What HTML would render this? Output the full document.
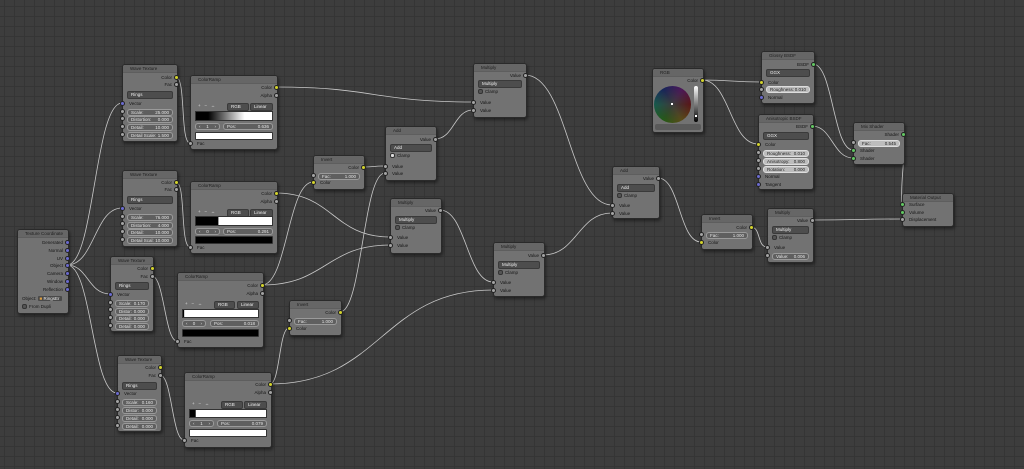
<!DOCTYPE html>
<html><head><meta charset="utf-8"><style>
html,body{margin:0;padding:0}
body{width:1024px;height:469px;overflow:hidden;position:relative;background-color:#3d3d3d;
background-image:linear-gradient(#353535 1px,transparent 1px),linear-gradient(90deg,#353535 1px,transparent 1px);
background-size:10px 10px;background-position:4px 6px;font-family:"Liberation Sans",sans-serif}
.n{position:absolute;background:#727272;border:1px solid #2a2a2a;border-radius:3px;box-shadow:1px 2px 3px rgba(0,0,0,.45);font-size:4.5px;line-height:6px;color:#151515;overflow:hidden}
.h{height:7px;background:#666;padding-left:7px;line-height:7px;color:#1e1e1e;border-bottom:1px solid #5e5e5e}
.n>div:not(.h){position:absolute}
.r{right:5px}.l{left:6px}
.f{left:4px;right:4px;height:5px;background:#5f5f5f;border:1px solid #9a9a9a;border-radius:3px;color:#e2e2e2;line-height:5px;padding:0 3px;display:flex;justify-content:space-between;box-sizing:content-box}
.fl{background:#bdbdbd;color:#222;border-color:#ddd}
.d{left:4px;right:4px;height:6px;background:#4d4d4d;border:1px solid #3a3a3a;border-radius:2px;color:#eee;line-height:6px;padding-left:3px}
.cb{display:inline-block;width:3px;height:3px;border:1px solid #333;border-radius:2px;background:#555;vertical-align:middle;margin-right:2px}
.s{position:absolute;width:3.5px;height:3.5px;border-radius:50%;border:0.5px solid #222;margin:-2.25px 0 0 -2.25px}
.y{background:#d4d42c}.g{background:#a4a4a4}.p{background:#6b6bd0}.gr{background:#62c862}
svg{position:absolute;left:0;top:0}
</style></head><body>
<svg width="1024" height="469" fill="none" stroke="#c8c8c8" stroke-width="0.8">
<path d="M67 265 C94.5 265 94.5 103 122 103"/>
<path d="M67 265 C94.5 265 94.5 208 122 208"/>
<path d="M67 265 C88 265 88 294 110 294"/>
<path d="M67 265 C92 265 92 393 117 393"/>
<path d="M176 77 C186 77 180 143 190 143"/>
<path d="M176 182 C186 182 180 247 190 247"/>
<path d="M152 276 C164 276 165 341 177 341"/>
<path d="M160 375 C172 375 172 440 184 440"/>
<path d="M276 87 C374 87 374 102 473 102"/>
<path d="M435 139 C454 139 454 110 473 110"/>
<path d="M276 193 C333 193 333 237 390 237"/>
<path d="M262 285 C326 285 326 245 390 245"/>
<path d="M262 285 C287 285 288 182 313 182"/>
<path d="M363 167 C374 167 374 166 385 166"/>
<path d="M340 312 C362 312 363 173 385 173"/>
<path d="M270 384 C280 384 279 328 289 328"/>
<path d="M270 384 C381 384 382 290 493 290"/>
<path d="M440 210 C466 210 467 282 493 282"/>
<path d="M525 75 C568 75 569 205 612 205"/>
<path d="M543 255 C577 255 578 213 612 213"/>
<path d="M658 178 C680 178 679 242 701 242"/>
<path d="M751 227 C761 227 757 247 767 247"/>
<path d="M812 220 C857 220 857 219 902 219"/>
<path d="M702 80 C731 80 732 82 761 82"/>
<path d="M702 80 C730 80 730 144 758 144"/>
<path d="M813 64 C833 64 833 150 853 150"/>
<path d="M812 126 C832 126 833 158 853 158"/>
<path d="M903 134 C906 160 900 180 902 204"/>
</svg>

<div class="n" style="left:17px;top:229px;width:50px;height:83px">
<div class="h">Texture Coordinate</div>
<div class="r" style="top:10px">Generated</div><div class="r" style="top:18px">Normal</div><div class="r" style="top:26px">UV</div><div class="r" style="top:33px">Object</div><div class="r" style="top:41px">Camera</div><div class="r" style="top:49px">Window</div><div class="r" style="top:57px">Reflection</div>
<div class="l" style="top:66px;left:4px">Object: <span style="background:#4a4a4a;color:#eee;padding:0 2px;border-radius:1px"><span style="color:#e0a040">■</span> RingsEr</span></div>
<div class="l" style="top:74px;left:4px"><span class="cb"></span>From Dupli</div>
</div>

<div class="n" style="left:122px;top:64px;width:54px;height:76px"><div class="h">Wave Texture</div>
<div class="r" style="top:10px">Color</div><div class="r" style="top:17px">Fac</div>
<div class="d" style="top:26px">Rings</div><div class="l" style="top:36px">Vector</div>
<div class="f" style="top:44px"><span>Scale:</span><span>25.000</span></div>
<div class="f" style="top:51px"><span>Distortion:</span><span>0.000</span></div>
<div class="f" style="top:59px"><span>Detail:</span><span>10.000</span></div>
<div class="f" style="top:67px"><span>Detail Scale:</span><span>1.500</span></div></div>

<div class="n" style="left:122px;top:170px;width:54px;height:75px"><div class="h">Wave Texture</div>
<div class="r" style="top:9px">Color</div><div class="r" style="top:16px">Fac</div>
<div class="d" style="top:25px">Rings</div><div class="l" style="top:35px">Vector</div>
<div class="f" style="top:43px"><span>Scale:</span><span>76.000</span></div>
<div class="f" style="top:51px"><span>Distortion:</span><span>4.000</span></div>
<div class="f" style="top:58px"><span>Detail:</span><span>10.000</span></div>
<div class="f" style="top:66px"><span>Detail Scal:</span><span>10.000</span></div></div>

<div class="n" style="left:110px;top:256px;width:42px;height:74px"><div class="h">Wave Texture</div>
<div class="r" style="top:9px">Color</div><div class="r" style="top:17px">Fac</div>
<div class="d" style="top:25px">Rings</div><div class="l" style="top:35px">Vector</div>
<div class="f" style="top:43px"><span>Scale:</span><span>0.170</span></div>
<div class="f" style="top:51px"><span>Distor:</span><span>0.000</span></div>
<div class="f" style="top:58px"><span>Detail:</span><span>0.000</span></div>
<div class="f" style="top:66px"><span>Detail:</span><span>0.000</span></div></div>

<div class="n" style="left:117px;top:355px;width:43px;height:75px"><div class="h">Wave Texture</div>
<div class="r" style="top:9px">Color</div><div class="r" style="top:17px">Fac</div>
<div class="d" style="top:26px">Rings</div><div class="l" style="top:35px">Vector</div>
<div class="f" style="top:43px"><span>Scale:</span><span>0.160</span></div>
<div class="f" style="top:51px"><span>Distor:</span><span>0.000</span></div>
<div class="f" style="top:59px"><span>Detail:</span><span>0.000</span></div>
<div class="f" style="top:67px"><span>Detail:</span><span>0.000</span></div></div>

<div class="n" style="left:190px;top:75px;width:86px;height:73px"><div class="h">ColorRamp</div>
<div class="r" style="top:9px">Color</div><div class="r" style="top:17px">Alpha</div>
<div class="l" style="top:27px;left:7px;color:#ddd">+ &nbsp;&nbsp;− &nbsp;&nbsp;↔</div>
<div class="d" style="top:27px;left:36px;right:28px">RGB</div><div class="d" style="top:27px;left:59px;right:4px">Linear</div>
<div style="top:35px;left:4px;right:4px;height:8px;background:linear-gradient(90deg,#000 16%,#fff 64%);border:1px solid #333"></div>
<div class="f" style="top:47px;right:57px"><span>‹</span><span>1</span><span>›</span></div>
<div class="f" style="top:47px;left:32px"><span>Pos:</span><span>0.636</span></div>
<div style="top:56px;left:4px;right:4px;height:6px;background:#fff;border:1px solid #333;border-radius:1px"></div>
<div class="l" style="top:65px">Fac</div></div>

<div class="n" style="left:190px;top:181px;width:86px;height:71px"><div class="h">ColorRamp</div>
<div class="r" style="top:9px">Color</div><div class="r" style="top:17px">Alpha</div>
<div class="l" style="top:27px;left:7px;color:#ddd">+ &nbsp;&nbsp;− &nbsp;&nbsp;↔</div>
<div class="d" style="top:27px;left:36px;right:28px">RGB</div><div class="d" style="top:27px;left:59px;right:4px">Linear</div>
<div style="top:34px;left:4px;right:4px;height:8px;background:linear-gradient(90deg,#000 29%,#fff 30%);border:1px solid #333"></div>
<div class="f" style="top:46px;right:57px"><span>‹</span><span>0</span><span>›</span></div>
<div class="f" style="top:46px;left:32px"><span>Pos:</span><span>0.291</span></div>
<div style="top:54px;left:4px;right:4px;height:6px;background:#000;border:1px solid #333;border-radius:1px"></div>
<div class="l" style="top:63px">Fac</div></div>

<div class="n" style="left:177px;top:272px;width:85px;height:74px"><div class="h">ColorRamp</div>
<div class="r" style="top:10px">Color</div><div class="r" style="top:18px">Alpha</div>
<div class="l" style="top:28px;left:7px;color:#ddd">+ &nbsp;&nbsp;− &nbsp;&nbsp;↔</div>
<div class="d" style="top:28px;left:36px;right:28px">RGB</div><div class="d" style="top:28px;left:59px;right:4px">Linear</div>
<div style="top:36px;left:4px;right:4px;height:7px;background:linear-gradient(90deg,#000 1%,#fff 2%);border:1px solid #333"></div>
<div class="f" style="top:47px;right:57px"><span>‹</span><span>0</span><span>›</span></div>
<div class="f" style="top:47px;left:32px"><span>Pos:</span><span>0.018</span></div>
<div style="top:56px;left:4px;right:4px;height:6px;background:#000;border:1px solid #333;border-radius:1px"></div>
<div class="l" style="top:66px">Fac</div></div>

<div class="n" style="left:184px;top:372px;width:86px;height:74px"><div class="h">ColorRamp</div>
<div class="r" style="top:9px">Color</div><div class="r" style="top:17px">Alpha</div>
<div class="l" style="top:28px;left:7px;color:#ddd">+ &nbsp;&nbsp;− &nbsp;&nbsp;↔</div>
<div class="d" style="top:28px;left:36px;right:28px">RGB</div><div class="d" style="top:28px;left:59px;right:4px">Linear</div>
<div style="top:36px;left:4px;right:4px;height:7px;background:linear-gradient(90deg,#000 7%,#fff 8%);border:1px solid #333"></div>
<div class="f" style="top:47px;right:57px"><span>‹</span><span>1</span><span>›</span></div>
<div class="f" style="top:47px;left:32px"><span>Pos:</span><span>0.079</span></div>
<div style="top:56px;left:4px;right:4px;height:6px;background:#fff;border:1px solid #333;border-radius:1px"></div>
<div class="l" style="top:65px">Fac</div></div>

<div class="n" style="left:313px;top:155px;width:50px;height:33px"><div class="h">Invert</div>
<div class="r" style="top:9px">Color</div><div class="f" style="top:17px"><span>Fac:</span><span>1.000</span></div><div class="l" style="top:24px">Color</div></div>
<div class="n" style="left:289px;top:300px;width:51px;height:34px"><div class="h">Invert</div>
<div class="r" style="top:9px">Color</div><div class="f" style="top:17px"><span>Fac:</span><span>1.000</span></div><div class="l" style="top:25px">Color</div></div>
<div class="n" style="left:701px;top:214px;width:50px;height:34px"><div class="h">Invert</div>
<div class="r" style="top:10px">Color</div><div class="f" style="top:17px"><span>Fac:</span><span>1.000</span></div><div class="l" style="top:25px">Color</div></div>

<div class="n" style="left:385px;top:126px;width:50px;height:53px"><div class="h">Add</div>
<div class="r" style="top:10px">Value</div><div class="d" style="top:17px">Add</div>
<div class="l" style="top:26px;left:4px"><span class="cb" style="background:#ddd"></span>Clamp</div>
<div class="l" style="top:37px">Value</div><div class="l" style="top:44px">Value</div></div>
<div class="n" style="left:473px;top:63px;width:52px;height:53px"><div class="h">Multiply</div>
<div class="r" style="top:9px">Value</div><div class="d" style="top:16px">Multiply</div>
<div class="l" style="top:25px;left:4px"><span class="cb"></span>Clamp</div>
<div class="l" style="top:36px">Value</div><div class="l" style="top:44px">Value</div></div>
<div class="n" style="left:390px;top:198px;width:50px;height:54px"><div class="h">Multiply</div>
<div class="r" style="top:9px">Value</div><div class="d" style="top:17px">Multiply</div>
<div class="l" style="top:26px;left:4px"><span class="cb"></span>Clamp</div>
<div class="l" style="top:36px">Value</div><div class="l" style="top:44px">Value</div></div>
<div class="n" style="left:493px;top:242px;width:50px;height:53px"><div class="h">Multiply</div>
<div class="r" style="top:10px">Value</div><div class="d" style="top:18px">Multiply</div>
<div class="l" style="top:27px;left:4px"><span class="cb"></span>Clamp</div>
<div class="l" style="top:37px">Value</div><div class="l" style="top:45px">Value</div></div>
<div class="n" style="left:612px;top:166px;width:46px;height:51px"><div class="h">Add</div>
<div class="r" style="top:9px">Value</div><div class="d" style="top:17px">Add</div>
<div class="l" style="top:26px;left:4px"><span class="cb"></span>Clamp</div>
<div class="l" style="top:36px">Value</div><div class="l" style="top:44px">Value</div></div>
<div class="n" style="left:767px;top:208px;width:45px;height:53px"><div class="h">Multiply</div>
<div class="r" style="top:9px">Value</div><div class="d" style="top:17px">Multiply</div>
<div class="l" style="top:26px;left:4px"><span class="cb"></span>Clamp</div>
<div class="l" style="top:36px">Value</div><div class="f" style="top:44px"><span>Value:</span><span>0.006</span></div></div>

<div class="n" style="left:652px;top:68px;width:50px;height:63px"><div class="h">RGB</div>
<div class="r" style="top:9px">Color</div>
<div style="left:1px;top:17px;width:37px;height:37px;border-radius:50%;background:radial-gradient(circle,rgba(70,70,70,1) 0,rgba(50,50,50,0) 70%),conic-gradient(from 90deg,#6a1a1a,#6a5a1a,#2a6a1a,#1a6a5a,#1a2a6a,#5a1a6a,#6a1a1a);filter:brightness(0.85)"></div>
<div style="left:18px;top:34px;width:2px;height:2px;background:#fff"></div>
<div style="left:41px;top:17px;width:4px;height:36px;border-radius:2px;background:linear-gradient(#fff,#000)"></div>
<div style="left:42px;top:46px;width:2px;height:2px;background:#fff"></div>
<div style="left:2px;right:2px;top:55px;height:6px;background:#5a5a5a;border-radius:2px"></div></div>

<div class="n" style="left:761px;top:51px;width:52px;height:51px"><div class="h">Glossy BSDF</div>
<div class="r" style="top:10px">BSDF</div><div class="d" style="top:17px">GGX</div>
<div class="l" style="top:28px">Color</div><div class="f fl" style="top:34px"><span>Roughness:</span><span>0.010</span></div>
<div class="l" style="top:43px">Normal</div></div>
<div class="n" style="left:758px;top:114px;width:54px;height:74px"><div class="h">Anisotropic BSDF</div>
<div class="r" style="top:9px">BSDF</div><div class="d" style="top:17px">GGX</div>
<div class="l" style="top:27px">Color</div>
<div class="f fl" style="top:35px"><span>Roughness:</span><span>0.010</span></div>
<div class="f fl" style="top:43px"><span>Anisotropy:</span><span>0.800</span></div>
<div class="f fl" style="top:51px"><span>Rotation:</span><span>0.000</span></div>
<div class="l" style="top:59px">Normal</div><div class="l" style="top:67px">Tangent</div></div>
<div class="n" style="left:853px;top:122px;width:50px;height:41px"><div class="h">Mix Shader</div>
<div class="r" style="top:9px">Shader</div><div class="f fl" style="top:17px"><span>Fac:</span><span>0.545</span></div>
<div class="l" style="top:25px">Shader</div><div class="l" style="top:33px">Shader</div></div>
<div class="n" style="left:902px;top:193px;width:50px;height:32px"><div class="h">Material Output</div>
<div class="l" style="top:8px">Surface</div><div class="l" style="top:16px">Volume</div><div class="l" style="top:23px">Displacement</div></div>

<i class="s p" style="left:67px;top:242px"></i><i class="s p" style="left:67px;top:250px"></i><i class="s p" style="left:67px;top:258px"></i><i class="s p" style="left:67px;top:265px"></i><i class="s p" style="left:67px;top:273px"></i><i class="s p" style="left:67px;top:281px"></i><i class="s p" style="left:67px;top:289px"></i>
<i class="s y" style="left:176px;top:77px"></i><i class="s g" style="left:176px;top:84px"></i><i class="s p" style="left:122px;top:103px"></i><i class="s g" style="left:122px;top:111px"></i><i class="s g" style="left:122px;top:118px"></i><i class="s g" style="left:122px;top:126px"></i><i class="s g" style="left:122px;top:134px"></i>
<i class="s y" style="left:176px;top:182px"></i><i class="s g" style="left:176px;top:189px"></i><i class="s p" style="left:122px;top:208px"></i><i class="s g" style="left:122px;top:216px"></i><i class="s g" style="left:122px;top:223px"></i><i class="s g" style="left:122px;top:231px"></i><i class="s g" style="left:122px;top:239px"></i>
<i class="s y" style="left:152px;top:268px"></i><i class="s g" style="left:152px;top:276px"></i><i class="s p" style="left:110px;top:294px"></i><i class="s g" style="left:110px;top:302px"></i><i class="s g" style="left:110px;top:309px"></i><i class="s g" style="left:110px;top:317px"></i><i class="s g" style="left:110px;top:325px"></i>
<i class="s y" style="left:160px;top:367px"></i><i class="s g" style="left:160px;top:375px"></i><i class="s p" style="left:117px;top:393px"></i><i class="s g" style="left:117px;top:401px"></i><i class="s g" style="left:117px;top:409px"></i><i class="s g" style="left:117px;top:417px"></i><i class="s g" style="left:117px;top:425px"></i>
<i class="s y" style="left:276px;top:87px"></i><i class="s g" style="left:276px;top:95px"></i><i class="s g" style="left:190px;top:143px"></i>
<i class="s y" style="left:276px;top:193px"></i><i class="s g" style="left:276px;top:201px"></i><i class="s g" style="left:190px;top:247px"></i>
<i class="s y" style="left:262px;top:285px"></i><i class="s g" style="left:262px;top:293px"></i><i class="s g" style="left:177px;top:341px"></i>
<i class="s y" style="left:270px;top:384px"></i><i class="s g" style="left:270px;top:392px"></i><i class="s g" style="left:184px;top:440px"></i>
<i class="s y" style="left:363px;top:167px"></i><i class="s g" style="left:313px;top:175px"></i><i class="s y" style="left:313px;top:182px"></i>
<i class="s y" style="left:340px;top:312px"></i><i class="s g" style="left:289px;top:320px"></i><i class="s y" style="left:289px;top:328px"></i>
<i class="s y" style="left:751px;top:227px"></i><i class="s g" style="left:701px;top:234px"></i><i class="s y" style="left:701px;top:242px"></i>
<i class="s g" style="left:435px;top:139px"></i><i class="s g" style="left:385px;top:166px"></i><i class="s g" style="left:385px;top:173px"></i>
<i class="s g" style="left:525px;top:75px"></i><i class="s g" style="left:473px;top:102px"></i><i class="s g" style="left:473px;top:110px"></i>
<i class="s g" style="left:440px;top:210px"></i><i class="s g" style="left:390px;top:237px"></i><i class="s g" style="left:390px;top:245px"></i>
<i class="s g" style="left:543px;top:255px"></i><i class="s g" style="left:493px;top:282px"></i><i class="s g" style="left:493px;top:290px"></i>
<i class="s g" style="left:658px;top:178px"></i><i class="s g" style="left:612px;top:205px"></i><i class="s g" style="left:612px;top:213px"></i>
<i class="s g" style="left:812px;top:220px"></i><i class="s g" style="left:767px;top:247px"></i><i class="s g" style="left:767px;top:255px"></i>
<i class="s y" style="left:702px;top:80px"></i>
<i class="s gr" style="left:813px;top:64px"></i><i class="s y" style="left:761px;top:82px"></i><i class="s g" style="left:761px;top:89px"></i><i class="s p" style="left:761px;top:97px"></i>
<i class="s gr" style="left:812px;top:126px"></i><i class="s y" style="left:758px;top:144px"></i><i class="s g" style="left:758px;top:152px"></i><i class="s g" style="left:758px;top:160px"></i><i class="s g" style="left:758px;top:168px"></i><i class="s p" style="left:758px;top:176px"></i><i class="s p" style="left:758px;top:184px"></i>
<i class="s gr" style="left:903px;top:134px"></i><i class="s g" style="left:853px;top:142px"></i><i class="s gr" style="left:853px;top:150px"></i><i class="s gr" style="left:853px;top:158px"></i>
<i class="s gr" style="left:902px;top:204px"></i><i class="s gr" style="left:902px;top:212px"></i><i class="s g" style="left:902px;top:219px"></i>
</body></html>
